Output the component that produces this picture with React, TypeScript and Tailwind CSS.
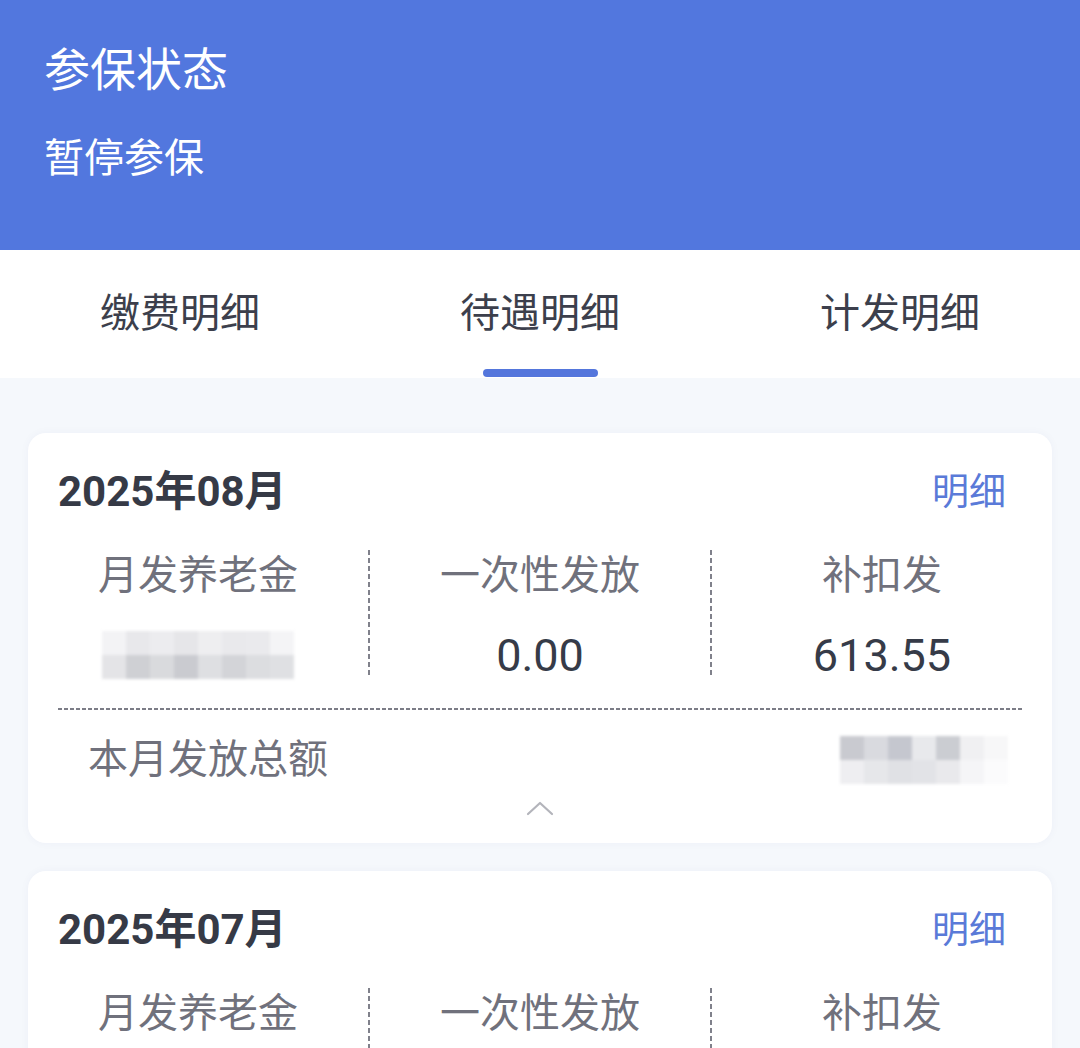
import React from "react";

type Month = {
    title: string;
    pension: string | null;
    once: string;
    supplement: string;
};

const months: Month[] = [
    { title: "2025年08月", pension: null, once: "0.00", supplement: "613.55" },
    { title: "2025年07月", pension: null, once: "0.00", supplement: "0.00" },
];

const tabs = ["缴费明细", "待遇明细", "计发明细"];

// masked (pixelated) figure
const Mosaic = ({ rows }: { rows: string[][] }) => (
    <div className="flex flex-col blur-[1.5px]">
        {rows.map((row, i) => (
            <div key={i} className="flex">
                {row.map((c, j) => (
                    <div key={j} className="w-[24px] h-[24px]" style={{ backgroundColor: c }} />
                ))}
            </div>
        ))}
    </div>
);

const VDash = () => (
    <div className="w-[2px] self-stretch bg-[repeating-linear-gradient(to_bottom,#80818b_0_5px,transparent_5px_8px)]" />
);

const Stat = ({ label, value }: { label: string; value: React.ReactNode }) => (
    <div className="flex-1 flex flex-col items-center pt-[6px]">
        <div className="text-[40px] leading-none text-[#70717c]">{label}</div>
        <div className="mt-[36px] h-[46px] flex items-center text-[45px] leading-none text-[#363b48]">{value}</div>
    </div>
);

const Card = ({ m }: { m: Month }) => (
    <div className="bg-white rounded-[18px] shadow-[0_0_10px_rgba(40,60,120,0.04)] pb-[27px]">
        <div className="flex items-center justify-between pl-[30px] pr-[46px] pt-[38px] h-[80px]">
            <div className="text-[42px] leading-none font-bold text-[#363a46]">{m.title}</div>
            <div className="text-[37px] leading-none text-[#5a7ad8]">明细</div>
        </div>
        <div className="flex mt-[37px] h-[128px]">
            <Stat
                label="月发养老金"
                value={
                    <Mosaic
                        rows={[
                            ["#f3f3f5", "#e8e8eb", "#ececef", "#e6e6e9", "#eeeef0", "#e9e9ec", "#eaeaed", "#f4f4f6"],
                            ["#e4e4e7", "#cfd0d4", "#d9dadd", "#cacbd0", "#dedfe2", "#d3d4d8", "#dcdde0", "#dfe0e3"],
                        ]}
                    />
                }
            />
            <VDash />
            <Stat label="一次性发放" value={m.once} />
            <VDash />
            <Stat label="补扣发" value={m.supplement} />
        </div>
        <div className="mx-[30px] mt-[30px] h-[2px] bg-[repeating-linear-gradient(to_right,#7c7d87_0_4px,transparent_4px_6px)]" />
        <div className="flex items-center justify-between pl-[60px] pr-[44px] mt-[26px] h-[48px]">
            <div className="text-[40px] leading-none text-[#70717c]">本月发放总额</div>
            <Mosaic
                rows={[
                    ["#c9cad0", "#d9dadf", "#c5c7cf", "#e8e9ec", "#cbcdd2", "#f0f0f2", "#f7f7f8"],
                    ["#eeeef1", "#e6e7ea", "#e0e1e5", "#e2e3e7", "#e9e9ec", "#f5f5f7", "#fbfbfc"],
                ]}
            />
        </div>
        <div className="flex justify-center mt-[16px]">
            <svg width="30" height="16" viewBox="0 0 30 16" fill="none">
                <polyline points="3,14 15,3 27,14" stroke="#b3b4bb" strokeWidth="2.2" strokeLinecap="round" strokeLinejoin="round" />
            </svg>
        </div>
    </div>
);

export default function App() {
    return (
        <div className="w-[1080px] min-h-[1048px] bg-[#f5f8fc] font-['Roboto','Noto_Sans_CJK_SC',sans-serif] overflow-hidden">
            <header className="h-[250px] bg-[#5277de] px-[44px] pt-[47px] text-white">
                <div className="text-[46px] leading-none">参保状态</div>
                <div className="mt-[46px] text-[40px] leading-none">暂停参保</div>
            </header>

            <nav className="grid grid-cols-3 h-[128px] bg-white">
                {tabs.map((t, i) => (
                    <div key={t} className="flex flex-col items-center pt-[44px]">
                        <div className="text-[40px] leading-none text-[#3c3f4c]">{t}</div>
                        {i === 1 && <div className="mt-auto mb-px w-[115px] h-[8px] rounded-full bg-[#5476dc]" />}
                    </div>
                ))}
            </nav>

            <div className="flex flex-col gap-[28px] px-[28px] pt-[55px]">
                {months.map((m) => (
                    <Card key={m.title} m={m} />
                ))}
            </div>
        </div>
    );
}
